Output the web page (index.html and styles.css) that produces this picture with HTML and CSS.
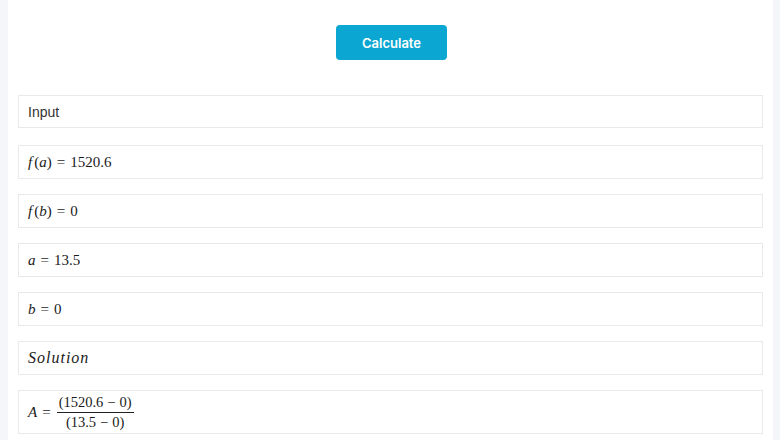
FILE: index.html
```html
<!DOCTYPE html>
<html lang="en">
<head>
    <meta charset="UTF-8">
    <title>Calculator</title>
    <link rel="stylesheet" href="styles.css">
</head>
<body>
    <div class="panel">
        <div class="actions">
            <button class="calc-button">Calculate</button>
        </div>
        <div class="rows">
            <div class="row label">Input</div>
            <div class="row math"><i class="fn">f</i>(<i>a</i>)<span class="op">=</span>1520.6</div>
            <div class="row math"><i class="fn">f</i>(<i>b</i>)<span class="op">=</span>0</div>
            <div class="row math"><i>a</i><span class="op">=</span>13.5</div>
            <div class="row math"><i>b</i><span class="op">=</span>0</div>
            <div class="row math title"><i>Solution</i></div>
            <div class="row math tall">
                <i>A</i><span class="op">=</span>
                <span class="frac">
                    <span class="num">(1520.6<span class="op">&minus;</span>0)</span>
                    <span class="den">(13.5<span class="op">&minus;</span>0)</span>
                </span>
            </div>
        </div>
    </div>
</body>
</html>
```

FILE: styles.css
```css
body, html {
    margin: 0;
    padding: 0;
    background-color: #f5f6f9;
}
.panel {
    background-color: #ffffff;
    margin: 0 7px 0 8px;
    padding: 25px 10px 0 10px;
    min-height: 440px;
    box-sizing: border-box;
}
.actions {
    text-align: center;
    margin-left: 2px;
}
.calc-button {
    background-color: #0ba6d1;
    color: #ffffff;
    border: none;
    border-radius: 4px;
    width: 111px;
    height: 35px;
    font-family: Inter, "Liberation Sans", sans-serif;
    font-weight: 600;
    font-size: 13px;
    cursor: pointer;
}
.rows {
    margin-top: 35px;
    display: flex;
    flex-direction: column;
    gap: 15px;
}
.row {
    height: 34px;
    border: 1px solid #e9e9ec;
    box-sizing: border-box;
    padding: 0 9px;
    display: flex;
    align-items: center;
    color: #1a1a1a;
}
.label {
    height: 33px;
    margin-bottom: 2px;
    font-family: "Liberation Sans", Arial, sans-serif;
    font-size: 14px;
    color: #333;
}
.math {
    font-family: "Liberation Serif", "Times New Roman", serif;
    font-size: 15px;
}
.math .fn {
    margin-right: 2px;
}
.math .op {
    margin: 0 5px;
}
.title {
    font-size: 16px;
    letter-spacing: 1px;
}
.tall {
    height: 44px;
}
.frac {
    display: inline-flex;
    flex-direction: column;
    align-items: center;
    font-size: 14.5px;
    line-height: 17px;
    margin-left: 1px;
    padding-top: 1px;
}
.num {
    padding: 0 2px 1px 2px;
    border-bottom: 1px solid #222;
}
.den {
    padding-top: 1px;
}
.frac .op {
    margin: 0 4px;
}
```
